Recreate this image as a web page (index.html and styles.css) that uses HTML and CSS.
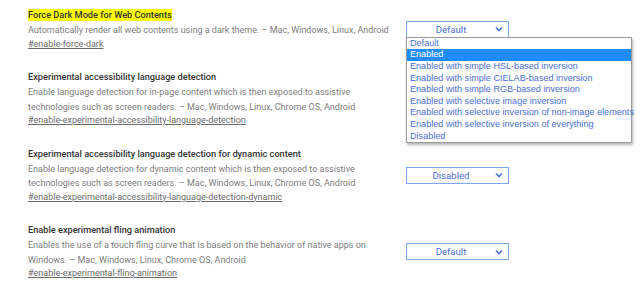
FILE: index.html
```html
<!DOCTYPE html>
<html lang="en">
    <head>
        <meta charset="UTF-8">
        <meta name="viewport" content="width=device-width, initial-scale=1.0">
        <title>Experiments</title>
        <link rel="stylesheet" href="styles.css">
    </head>
    <body>

        <div id="flags">
            <div class="flag">
                <div class="flag-text">
                    <h3 class="flag-name"><mark>Force Dark Mode for Web Contents</mark></h3>
                    <p class="flag-desc">Automatically render all web contents using a dark theme. – Mac, Windows, Linux, Android</p>
                    <a class="flag-link" href="#">#enable-force-dark</a>
                </div>
                <div class="flag-control">
                    <div class="select">
                        <span>Default</span>
                        <svg class="chevron" width="8" height="6" viewBox="0 0 8 6"><path d="M1 1.5 L4 4.5 L7 1.5" fill="none" stroke="#4a72d8" stroke-width="1.6"/></svg>
                    </div>
                    <ul class="dropdown">
                        <li>Default</li>
                        <li class="selected">Enabled</li>
                        <li>Enabled with simple HSL-based inversion</li>
                        <li>Enabled with simple CIELAB-based inversion</li>
                        <li>Enabled with simple RGB-based inversion</li>
                        <li>Enabled with selective image inversion</li>
                        <li>Enabled with selective inversion of non-image elements</li>
                        <li>Enabled with selective inversion of everything</li>
                        <li>Disabled</li>
                    </ul>
                </div>
            </div>

            <div class="flag">
                <div class="flag-text">
                    <h3 class="flag-name">Experimental accessibility language detection</h3>
                    <p class="flag-desc">Enable language detection for in-page content which is then exposed to assistive technologies such as screen readers. – Mac, Windows, Linux, Chrome OS, Android</p>
                    <a class="flag-link" href="#">#enable-experimental-accessibility-language-detection</a>
                </div>
                <div class="flag-control"></div>
            </div>

            <div class="flag">
                <div class="flag-text">
                    <h3 class="flag-name">Experimental accessibility language detection for dynamic content</h3>
                    <p class="flag-desc">Enable language detection for dynamic content which is then exposed to assistive technologies such as screen readers. – Mac, Windows, Linux, Chrome OS, Android</p>
                    <a class="flag-link" href="#">#enable-experimental-accessibility-language-detection-dynamic</a>
                </div>
                <div class="flag-control">
                    <div class="select">
                        <span>Disabled</span>
                        <svg class="chevron" width="8" height="6" viewBox="0 0 8 6"><path d="M1 1.5 L4 4.5 L7 1.5" fill="none" stroke="#4a72d8" stroke-width="1.6"/></svg>
                    </div>
                </div>
            </div>

            <div class="flag">
                <div class="flag-text">
                    <h3 class="flag-name">Enable experimental fling animation</h3>
                    <p class="flag-desc">Enables the use of a touch fling curve that is based on the behavior of native apps on Windows. – Mac, Windows, Linux, Chrome OS, Android</p>
                    <a class="flag-link" href="#">#enable-experimental-fling-animation</a>
                </div>
                <div class="flag-control">
                    <div class="select">
                        <span>Default</span>
                        <svg class="chevron" width="8" height="6" viewBox="0 0 8 6"><path d="M1 1.5 L4 4.5 L7 1.5" fill="none" stroke="#4a72d8" stroke-width="1.6"/></svg>
                    </div>
                </div>
            </div>
        </div>

    </body>
</html>
```

FILE: styles.css
```css
body {
    margin: 0;
    background-color: #fff;
    font-family: Roboto, "Liberation Sans", sans-serif;
    font-size: 9px;
    overflow: hidden;
}

#flags {
    padding: 8px 0 0 28px;
}

.flag {
    display: flex;
    align-items: center;
    margin-bottom: 19.5px;
}

.flag-text {
    width: 372px;
}

.flag-name {
    margin: 0;
    font-size: 9.2px;
    font-weight: 500;
    line-height: 14px;
    color: #333;
}

.flag-name mark {
    display: inline-block;
    line-height: 12px;
    background-color: #ffff00;
    color: #333;
    padding: 0;
}

.flag-desc {
    margin: 1px 0 0;
    line-height: 14.5px;
    color: #7d7d7d;
}

.flag-link {
    display: inline-block;
    line-height: 13px;
    color: #6b6b6b;
    text-decoration: underline;
}

.flag-control {
    position: relative;
    margin-left: 6px;
}

.select {
    display: flex;
    align-items: center;
    box-sizing: border-box;
    width: 103px;
    height: 17px;
    padding: 0 5px 0 0;
    border: 1px solid #7aa7f0;
    color: #4a6fd6;
    font-size: 9.6px;
}

.select span {
    flex: 1;
    text-align: center;
}

.chevron {
    display: block;
}

.dropdown {
    position: absolute;
    top: 16px;
    left: 0;
    z-index: 2;
    width: 226px;
    box-sizing: border-box;
    margin: 0;
    padding: 0;
    list-style: none;
    background-color: #fff;
    border: 1px solid #9a9a9a;
    box-shadow: 1px 2px 3px rgba(0, 0, 0, 0.3);
    font-family: "Liberation Sans", Arial, sans-serif;
    font-size: 9.1px;
}

.dropdown li {
    padding-left: 3px;
    line-height: 11.6px;
    color: #4a6fd6;
    white-space: nowrap;
}

.dropdown li.selected {
    background-color: #1e8cff;
    color: #fff;
}
```
